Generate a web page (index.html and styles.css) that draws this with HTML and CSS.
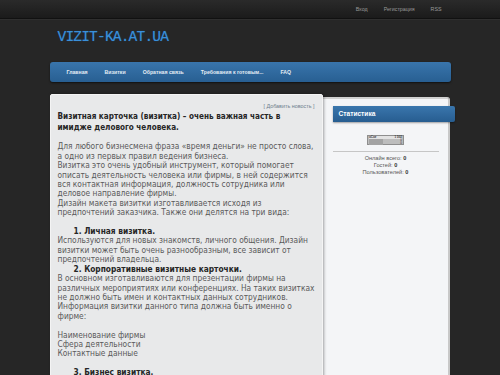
FILE: index.html
```html
<!DOCTYPE html>
<html lang="ru">
<head>
    <meta charset="UTF-8">
    <title>VIZIT-KA.AT.UA</title>
    <link rel="stylesheet" href="styles.css">
</head>
<body>
    <div class="topbar">
        <div class="topbar-inner">
            <a href="#">Вход</a>
            <a href="#">Регистрация</a>
            <a href="#">RSS</a>
        </div>
    </div>

    <div class="wrapper">
        <div class="logo">VIZIT-KA.AT.UA</div>

        <ul class="nav">
            <li><a href="#">Главная</a></li>
            <li><a href="#">Визитки</a></li>
            <li><a href="#">Обратная связь</a></li>
            <li><a href="#">Требования к готовым...</a></li>
            <li><a href="#">FAQ</a></li>
        </ul>

        <div class="content">
            <div class="main">
                <div class="add-news">[ <a href="#">Добавить новость</a> ]</div>
                <h1 class="post-title">Визитная карточка (визитка) – очень важная часть в имидже делового человека.</h1>
                <div class="post">
                    <br>
                    Для любого бизнесмена фраза «время деньги» не просто слова, а одно из первых правил ведения бизнеса.<br>
                    Визитка это очень удобный инструмент, который помогает описать деятельность человека или фирмы, в ней содержится вся контактная информация, должность сотрудника или деловое направление фирмы.<br>
                    Дизайн макета визитки изготавливается исходя из предпочтений заказчика. Также они делятся на три вида:<br>
                    <br>
                    <div class="kind">1. Личная визитка.</div>
                    Используются для новых знакомств, личного общения. Дизайн визитки может быть очень разнообразным, все зависит от предпочтений владельца.
                    <div class="kind">2. Корпоративные визитные карточки.</div>
                    В основном изготавливаются для презентации фирмы на различных мероприятиях или конференциях. На таких визитках не должно быть имен и контактных данных сотрудников. Информация визитки данного типа должна быть именно о фирме:<br>
                    <br>
                    Наименование фирмы<br>
                    Сфера деятельности<br>
                    Контактные данные<br>
                    <br>
                    <div class="kind">3. Бизнес визитка.</div>
                </div>
            </div>

            <div class="sidebar">
                <div class="block-title">Статистика</div>
                <div class="block-body">
                    <div class="counter">
                        <div class="counter-top"><span>uCoz</span><span>1 502</span></div>
                        <div class="counter-row"><span></span><span>0</span></div>
                        <div class="counter-row"><span></span><span>0</span></div>
                    </div>
                    <div class="stats">
                        <div>Онлайн всего: <b>0</b></div>
                        <div>Гостей: <b>0</b></div>
                        <div>Пользователей: <b>0</b></div>
                    </div>
                </div>
            </div>
        </div>
    </div>
</body>
</html>
```

FILE: styles.css
```css
* {
    margin: 0;
    padding: 0;
    box-sizing: border-box;
}

body {
    background: #262626;
    font-family: "Liberation Sans", Arial, sans-serif;
    height: 375px;
    overflow: hidden;
}

a {
    color: inherit;
    text-decoration: none;
}

.topbar {
    height: 19px;
    background: linear-gradient(#2a2a2a, #1b1b1b);
    border-bottom: 1px solid #111;
    box-shadow: 0 1px 0 #2f2f2f;
}

.topbar-inner {
    width: 401px;
    margin: 0 auto;
    display: flex;
    justify-content: flex-end;
    gap: 16px;
    padding: 6px 9px 0 0;
    font-size: 5.3px;
    color: #9a9a9a;
}

.wrapper {
    width: 401px;
    margin: 0 auto;
}

.logo {
    padding: 10px 0 0 8px;
    height: 43px;
    font-family: "Liberation Mono", monospace;
    font-size: 14.5px;
    letter-spacing: -0.8px;
    color: #3a8fd9;
    text-shadow: 0 0 1px #1d5a93;
}

.nav {
    list-style: none;
    display: flex;
    gap: 17px;
    height: 20px;
    align-items: center;
    padding-left: 17px;
    background: linear-gradient(#3975ac, #285f92);
    border-radius: 3px;
    box-shadow: 0 1px 2px rgba(0, 0, 0, 0.6);
    font-size: 5.2px;
    font-weight: bold;
    color: #e4ecf4;
}

.content {
    display: flex;
    margin-top: 12px;
    align-items: flex-start;
}

.main {
    width: 273px;
    height: 300px;
    background: #e8e9ea;
    border: 1px solid #f4f4f4;
    border-radius: 2px;
    box-shadow: 1px 0 3px rgba(0, 0, 0, 0.35);
    padding: 8px 5px 0 7px;
    position: relative;
    z-index: 1;
}

.add-news {
    text-align: right;
    font-size: 5.4px;
    color: #6e7d8c;
    padding-right: 2px;
    height: 8px;
}

.post-title {
    font-family: "DejaVu Sans Condensed", "DejaVu Sans", sans-serif;
    font-stretch: condensed;
    font-size: 8.1px;
    font-weight: bold;
    line-height: 11px;
    color: #262626;
}

.post {
    font-family: "DejaVu Sans Condensed", "DejaVu Sans", sans-serif;
    font-stretch: condensed;
    font-size: 8.3px;
    line-height: 9.4px;
    color: #5a5a5a;
}

.kind {
    font-weight: bold;
    color: #262626;
    padding-left: 16px;
}

.sidebar {
    width: 127px;
    height: 290px;
    margin-top: 3px;
    background: #f4f5f7;
    border-right: 2px solid #c8c8c8;
    border-top: 2px solid #d0d0d0;
    border-radius: 0 3px 0 0;
    padding-top: 7px;
}

.block-title {
    margin-left: 10px;
    margin-right: -7px;
    height: 16px;
    background: linear-gradient(#3a76ad, #275d90);
    border-radius: 0 2px 2px 0;
    box-shadow: 0 1px 2px rgba(0, 0, 0, 0.35);
    color: #fff;
    font-size: 6.6px;
    font-weight: bold;
    padding: 4px 0 0 6px;
}

.block-body {
    margin: 0 9px 0 10px;
}

.counter {
    width: 37px;
    height: 10px;
    margin: 13px auto 0;
    background: #bdbdbd;
    border: 1px solid #8e8e8e;
    font-size: 3px;
    line-height: 3px;
    color: #333;
    padding: 0 1px;
}

.counter-top,
.counter-row {
    display: flex;
    justify-content: space-between;
}

.counter-top {
    background: #e2e2e2;
    font-weight: bold;
}

.counter-row span:first-child {
    width: 14px;
    background: #a3a3a3;
}

.stats {
    border-top: 1px solid #c6c6c6;
    margin-top: 6px;
    padding-top: 3px;
    text-align: center;
    font-size: 5.6px;
    line-height: 7px;
    color: #555;
}

.stats b {
    color: #333;
}
```
